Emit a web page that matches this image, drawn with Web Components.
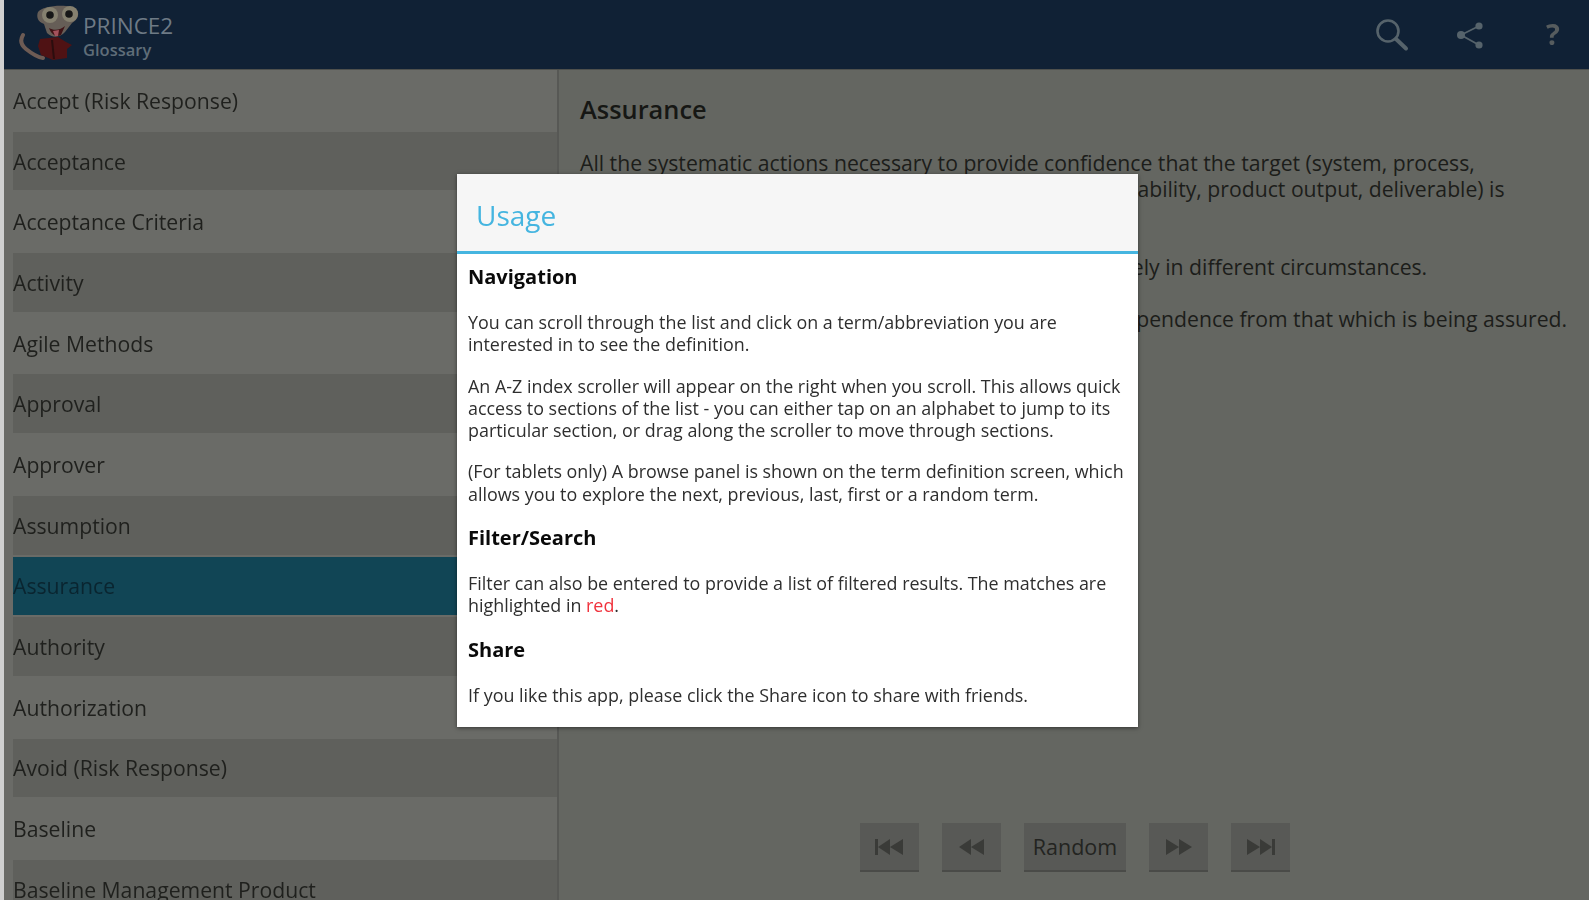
<!DOCTYPE html>
<html lang="en">
<head>
<meta charset="utf-8">
<title>PRINCE2 Glossary</title>
<style>
  html, body { margin: 0; height: 100%; overflow: hidden; background: #d0d0d0; }
  body { font-family: "Open Sans", "Liberation Sans", sans-serif; }
</style>
</head>
<body>
<app-shell>
  <app-header slot="header"></app-header>
  <term-list slot="list" selected="Assurance"></term-list>
  <term-detail slot="detail" heading="Assurance">
    <p>All the systematic actions necessary to provide confidence that the target (system, process, organization, programme, project, outcome, benefit, capability, product output, deliverable) is appropriate.</p>
    <p>Appropriateness may be defined subjectively or objectively in different circumstances.</p>
    <p>The implication is that assurance will have a level of independence from that which is being assured.</p>
  </term-detail>
  <usage-dialog slot="dialog" heading="Usage">
    <help-section heading="Navigation">
      <p>You can scroll through the list and click on a term/abbreviation you are interested in to see the definition.</p>
      <p>An A-Z index scroller will appear on the right when you scroll. This allows quick access to sections of the list - you can either tap on an alphabet to jump to its particular section, or drag along the scroller to move through sections.</p>
      <p>(For tablets only) A browse panel is shown on the term definition screen, which allows you to explore the next, previous, last, first or a random term.</p>
    </help-section>
    <help-section heading="Filter/Search">
      <p>Filter can also be entered to provide a list of filtered results. The matches are highlighted in <span style="color:#f0323c">red</span>.</p>
    </help-section>
    <help-section heading="Share">
      <p>If you like this app, please click the Share icon to share with friends.</p>
    </help-section>
  </usage-dialog>
</app-shell>

<script>
// page frame: header on top, list and detail below, dialog over everything
class AppShell extends HTMLElement {
  constructor() {
    super();
    const shadow = this.attachShadow({ mode: 'open' });
    shadow.innerHTML = `
    <style>
      :host { display: block; height: 900px; padding-left: 4px; position: relative; overflow: hidden; filter: blur(0.7px); }
      .frame { display: flex; flex-direction: column; height: 100%; }
      .main { flex: 1; display: flex; min-height: 0; }
      .overlay { position: absolute; left: 457px; top: 174px; }
    </style>
    <div class="frame">
      <slot name="header"></slot>
      <div class="main">
        <slot name="list"></slot>
        <slot name="detail"></slot>
      </div>
    </div>
    <div class="overlay"><slot name="dialog"></slot></div>
    `;
  }
}
customElements.define('app-shell', AppShell);

class AppHeader extends HTMLElement {
  constructor() {
    super();
    const shadow = this.attachShadow({ mode: 'open' });
    shadow.innerHTML = `
    <style>
      :host { display: flex; align-items: flex-start; height: 70px; background: #102135; border-bottom: 1px solid #4e504d; box-sizing: border-box; }
      .logo { margin-left: 14px; width: 66px; height: 66px; flex: none; }
      .titles { margin-left: -1px; padding-top: 14px; flex: 1; color: #6e7a85; }
      .name { font-size: 22.5px; line-height: 24px; }
      .sub { font-size: 16.5px; line-height: 22px; margin-top: 1px; font-weight: 600; color: #5f6d78; }
      .actions { display: flex; align-items: flex-start; }
      .actions svg { display: block; }
      .search { margin: 17px 45px 0 0; }
      .share { margin: 20px 57px 0 0; }
      .help { margin: 16px 25px 0 0; font-size: 29px; font-weight: 700; color: #565c5e; line-height: 36px; width: 22px; text-align: center; }
    </style>
    <svg class="logo" viewBox="0 0 66 66">
      <path d="M5 35c-3 5-2 10 3 14 5 4 10 8 17 9" fill="none" stroke="#6d5b54" stroke-width="4" stroke-linecap="round"/>
      <path d="M22 39l18-2 8 5 6 3-5 4 0 9-14 2-12-5-3-9z" fill="#4f1214"/>
      <path d="M34 40l2 19" stroke="#2b0d0e" stroke-width="2"/>
      <path d="M20 12c4-7 34-9 39-2 3 5 0 10-5 13l-7 9c-5 6-13 6-18 1l-3-9c-6-2-8-7-6-12z" fill="#665e57"/>
      <circle cx="32" cy="15" r="8" fill="#85806f"/><circle cx="32" cy="15" r="3.8" fill="#171717"/>
      <circle cx="52" cy="14" r="8" fill="#85806f"/><circle cx="51" cy="14" r="3.8" fill="#171717"/>
      <path d="M31 28c5 3 12 2 16-2l-4 9c-4 2-9 1-12-7z" fill="#401316"/>
      <path d="M35 31l6-1-1 6-3 0z" fill="#a5525c"/>
    </svg>
    <div class="titles">
      <div class="name">PRINCE2</div>
      <div class="sub">Glossary</div>
    </div>
    <div class="actions">
      <svg class="search" width="36" height="36" viewBox="0 0 36 36" fill="none" stroke="#56636b">
        <circle cx="14" cy="14" r="10.5" stroke-width="2.6"/>
        <path d="M22 22l10 9.5" stroke-width="4" stroke-linecap="round"/>
      </svg>
      <svg class="share" width="30" height="32" viewBox="0 0 30 32" fill="#56636b" stroke="#56636b">
        <path d="M24 6L6 15l18 10" fill="none" stroke-width="1.8"/>
        <circle cx="24" cy="6" r="3.6" stroke="none"/>
        <circle cx="6" cy="15" r="4" stroke="none"/>
        <circle cx="24" cy="25" r="3.6" stroke="none"/>
      </svg>
      <div class="help">?</div>
    </div>
    `;
  }
}
customElements.define('app-header', AppHeader);

const TERMS = [
  'Accept (Risk Response)', 'Acceptance', 'Acceptance Criteria', 'Activity',
  'Agile Methods', 'Approval', 'Approver', 'Assumption', 'Assurance', 'Authority',
  'Authorization', 'Avoid (Risk Response)', 'Baseline', 'Baseline Management Product'
];

class TermList extends HTMLElement {
  constructor() {
    super();
    const shadow = this.attachShadow({ mode: 'open' });
    shadow.innerHTML = `
    <style>
      :host { display: block; width: 555px; flex: none; overflow: hidden; background: #6a6b67; border-right: 2px solid #575855; box-sizing: border-box; }
    </style>
    <div id="rows"></div>
    `;
  }

  connectedCallback() {
    const rows = this.shadowRoot.getElementById('rows');
    rows.innerHTML = '';
    const selected = this.getAttribute('selected');
    for (let i = 0; i < TERMS.length; i++) {
      const row = document.createElement('term-row');
      row.textContent = TERMS[i];
      if (i % 2 === 1) row.setAttribute('shaded', '');
      if (TERMS[i] === selected) row.setAttribute('selected', '');
      rows.appendChild(row);
    }
  }
}
customElements.define('term-list', TermList);

class TermRow extends HTMLElement {
  constructor() {
    super();
    const shadow = this.attachShadow({ mode: 'open' });
    shadow.innerHTML = `
    <style>
      :host { display: block; height: 60.7px; box-sizing: border-box; padding: 1px 0 1px 9px; color: #1f201d; font-size: 21.2px; white-space: nowrap; }
      .label { height: 100%; display: flex; align-items: center; box-sizing: border-box; }
      :host([shaded]) .label { background: #5f605c; }
      :host([selected]) .label { background: #114555; color: #0a2530; }
    </style>
    <div class="label"><slot></slot></div>
    `;
  }
}
customElements.define('term-row', TermRow);

class TermDetail extends HTMLElement {
  constructor() {
    super();
    const shadow = this.attachShadow({ mode: 'open' });
    shadow.innerHTML = `
    <style>
      :host { display: flex; flex-direction: column; flex: 1; min-width: 0; background: #646661; color: #1c1d1a; padding: 24px 14px 0 21px; box-sizing: border-box; }
      h2 { margin: 0 0 26px; font-size: 25.4px; line-height: 30px; font-weight: 600; color: #161714; }
      .body { flex: 1; font-size: 21.2px; line-height: 26px; }
      ::slotted(p) { margin: 0 0 26px; }
      .nav { display: flex; justify-content: center; gap: 23px; padding: 0 0 28px 0; margin-left: -19px; margin-right: -14px; }
    </style>
    <h2 id="heading"></h2>
    <div class="body"><slot></slot></div>
    <div class="nav">
      <nav-button icon="first"></nav-button>
      <nav-button icon="prev"></nav-button>
      <nav-button>Random</nav-button>
      <nav-button icon="next"></nav-button>
      <nav-button icon="last"></nav-button>
    </div>
    `;
    shadow.getElementById('heading').textContent = this.getAttribute('heading') || '';
  }
}
customElements.define('term-detail', TermDetail);

// the four media style icons, drawn facing left or right
const NAV_ICONS = {
  first: '<path d="M0 2h3v16H0zM15 2v16L3 10zM28 2v16L15 10z"/>',
  prev: '<path d="M14 2v16L2 10zM27 2v16L14 10z"/>',
  next: '<path d="M1 2v16l13-8zM14 2v16l13-8z"/>',
  last: '<path d="M0 2v16l13-8zM13 2v16l12-8zM25 2h3v16h-3z"/>'
};

class NavButton extends HTMLElement {
  constructor() {
    super();
    const shadow = this.attachShadow({ mode: 'open' });
    const icon = NAV_ICONS[this.getAttribute('icon')];
    shadow.innerHTML = `
    <style>
      :host { display: flex; align-items: center; justify-content: center; height: 49px; min-width: 59px; box-sizing: border-box; background: #585956; border-bottom: 2px solid #4a4b48; color: #232421; font-size: 21.5px; padding: 0 9px; }
      svg { display: block; fill: #3a3b38; }
    </style>
    ${icon ? `<svg width="28" height="20" viewBox="0 0 28 20">${icon}</svg>` : '<slot></slot>'}
    `;
  }
}
customElements.define('nav-button', NavButton);

class UsageDialog extends HTMLElement {
  constructor() {
    super();
    const shadow = this.attachShadow({ mode: 'open' });
    shadow.innerHTML = `
    <style>
      :host { display: block; width: 681px; height: 553px; background: #fff; box-sizing: border-box; box-shadow: 0 1px 4px rgba(0,0,0,.5); overflow: hidden; }
      .title { height: 80px; box-sizing: border-box; background: #f6f6f6; border-bottom: 3px solid #45b5e0; padding: 4px 19px 0; display: flex; align-items: center; font-size: 28px; color: #45b5e0; }
      .content { padding: 11px 11px 0; }
    </style>
    <div class="title" id="title"></div>
    <div class="content"><slot></slot></div>
    `;
    shadow.getElementById('title').textContent = this.getAttribute('heading') || '';
  }
}
customElements.define('usage-dialog', UsageDialog);

class HelpSection extends HTMLElement {
  constructor() {
    super();
    const shadow = this.attachShadow({ mode: 'open' });
    shadow.innerHTML = `
    <style>
      :host { display: block; margin-bottom: 21px; }
      h3 { margin: 0 0 22px; font-size: 20px; line-height: 24px; font-weight: 700; color: #0a0a0a; }
      .text { font-size: 17.9px; line-height: 22.3px; color: #2e2e2e; }
      ::slotted(p) { margin: 0 0 19px; }
      ::slotted(p:last-child) { margin-bottom: 0; }
    </style>
    <h3 id="heading"></h3>
    <div class="text"><slot></slot></div>
    `;
    shadow.getElementById('heading').textContent = this.getAttribute('heading') || '';
  }
}
customElements.define('help-section', HelpSection);
</script>
</body>
</html>
